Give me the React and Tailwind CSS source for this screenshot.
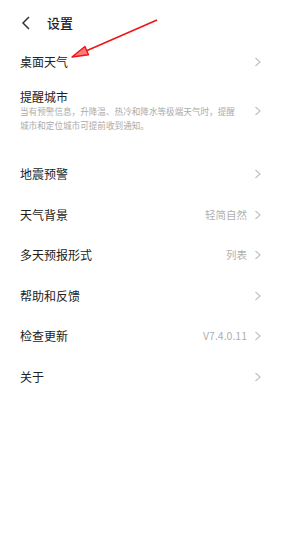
import React from "react";

const font = { fontFamily: '"Noto Sans CJK SC", "Noto Sans", sans-serif' };

function Chevron() {
  return (
    <svg width="8" height="10" viewBox="0 0 8 10" className="shrink-0">
      <polyline points="1.5,1 6,5 1.5,9" fill="none" stroke="#c2c2c2" strokeWidth="1.2" />
    </svg>
  );
}

function Row({ title, value }) {
  return (
    <div className="flex h-[40.5px] items-center justify-between pl-[20px] pr-[19px]">
      <span className="text-[12px] text-[#222]">{title}</span>
      <div className="flex items-center gap-[7px]">
        {value && <span className="text-[10.5px] text-[#b0b0b0]">{value}</span>}
        <Chevron />
      </div>
    </div>
  );
}

export default function App() {
  return (
    <div className="relative h-[560px] w-[281px] overflow-hidden bg-white" style={font}>
      {/* header */}
      <div className="flex h-[46px] items-center pl-[21px]">
        <svg width="10" height="14" viewBox="0 0 10 14">
          <polyline points="8,1 2,7 8,13" fill="none" stroke="#333" strokeWidth="1.5" />
        </svg>
        <span className="ml-[16px] text-[13px] font-medium text-[#222]">设置</span>
      </div>

      <div className="flex h-[32px] items-center justify-between pl-[20px] pr-[19px]">
        <span className="text-[12px] text-[#222]">桌面天气</span>
        <Chevron />
      </div>

      {/* 提醒城市 */}
      <div className="flex items-center justify-between pl-[20px] pr-[19px] pt-[12px]">
        <div className="w-[218px]">
          <div className="text-[12px] leading-[14px] text-[#222]">提醒城市</div>
          <div className="text-[8.6px] leading-[14px] text-[#ababab]">
            当有预警信息，升降温、热冷和降水等极端天气时，提醒城市和定位城市可提前收到通知。
          </div>
        </div>
        <Chevron />
      </div>

      <div className="h-[22px]" />

      <Row title="地震预警" />
      <Row title="天气背景" value="轻简自然" />
      <Row title="多天预报形式" value="列表" />
      <Row title="帮助和反馈" />
      <Row title="检查更新" value="V7.4.0.11" />
      <Row title="关于" />

      {/* red annotation arrow */}
      <svg className="pointer-events-none absolute left-0 top-0" width="281" height="100">
        <line x1="157" y1="20" x2="86" y2="51" stroke="#f01414" strokeWidth="1.6" />
        <polygon points="72,57 88.5,54.7 84.9,46.5" fill="#ff7a7a" stroke="#f01414" strokeWidth="1.4" strokeLinejoin="round" />
      </svg>
    </div>
  );
}
